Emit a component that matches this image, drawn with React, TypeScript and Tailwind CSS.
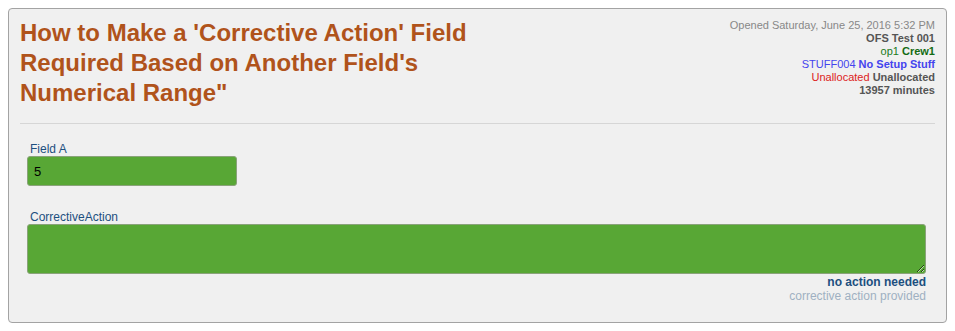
import React from 'react';

export default function App() {
  return (
    <div className="min-h-[331px] bg-white p-2 font-['Liberation_Sans',Arial,sans-serif]">
      <div className="h-[315px] rounded-[4px] border border-[#a3a3a3] bg-[#f0f0f0] px-[11px] pt-[9px]">
        {/* Header */}
        <div className="flex justify-between">
          <h1 className="w-[480px] text-[24px] font-bold leading-[30px] text-[#b0531b]">
            How to Make a 'Corrective Action' Field Required Based on Another Field's Numerical Range"
          </h1>
          <div className="pt-[1px] text-right text-[11px] leading-[13px] text-[#555]">
            <div className="text-[#888]">Opened Saturday, June 25, 2016 5:32 PM</div>
            <div className="font-bold text-[#555]">OFS Test 001</div>
            <div className="text-[#1a7a1a]">
              op1 <span className="font-bold text-[#136b13]">Crew1</span>
            </div>
            <div className="text-[#4444ee]">
              STUFF004 <span className="font-bold">No Setup Stuff</span>
            </div>
            <div>
              <span className="text-[#dd2222]">Unallocated</span>{' '}
              <span className="font-bold">Unallocated</span>
            </div>
            <div className="font-bold">13957 minutes</div>
          </div>
        </div>

        <hr className="mt-[15px] border-t border-[#d6d6d6]" />

        {/* Form */}
        <div className="pl-[7px] pr-[9px] pt-[18px]">
          <label className="block pl-[3px] text-[12px] leading-[14px] text-[#1d4f7f]">Field A</label>
          <input
            defaultValue="5"
            className="block h-[30px] w-[210px] rounded-[3px] border border-[#8aa37a] bg-[#58a735] px-[6px] text-[13px] text-black outline-none"
          />

          <label className="mt-[24px] block pl-[3px] text-[12px] leading-[14px] text-[#1d4f7f]">
            CorrectiveAction
          </label>
          <textarea className="block h-[50px] w-full rounded-[3px] border border-[#8aa37a] bg-[#58a735] px-[6px] outline-none" />

          <div className="pt-[1px] text-right text-[12px] leading-[14px]">
            <div className="font-bold text-[#1d4f7f]">no action needed</div>
            <div className="text-[#9fb0c2]">corrective action provided</div>
          </div>
        </div>
      </div>
    </div>
  );
}
